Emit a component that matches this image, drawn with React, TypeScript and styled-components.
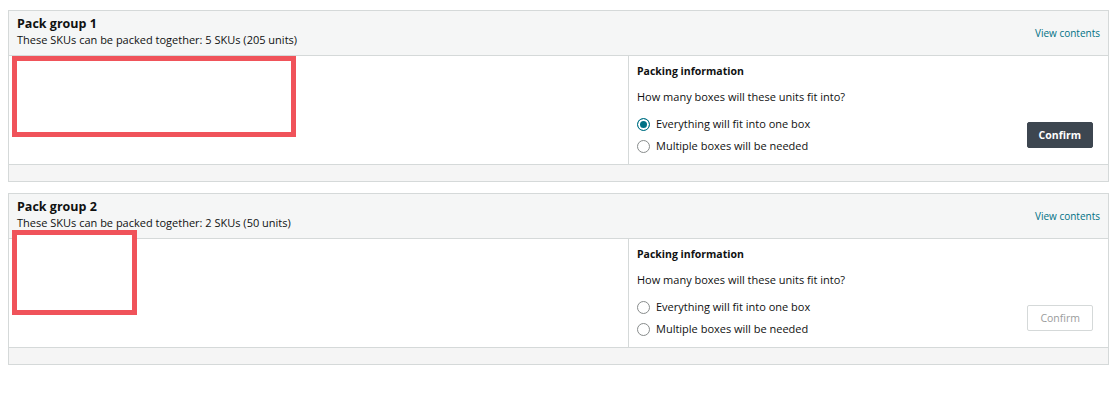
import React, { useState } from 'react';
import styled, { createGlobalStyle } from 'styled-components';

const GlobalStyle = createGlobalStyle`
  html, body {
    margin: 0;
    padding: 0;
    background: #ffffff;
  }
  body {
    font-family: 'Open Sans', 'Liberation Sans', sans-serif;
    color: #0f1111;
  }
`;

type Group = {
  id: number;
  skus: number;
  units: number;
  redact: { left: number; top: number; width: number; height: number };
  defaultChoice: 'one' | 'multiple' | null;
};

const groups: Group[] = [
  { id: 1, skus: 5, units: 205, redact: { left: 3, top: 0, width: 284, height: 81 }, defaultChoice: 'one' },
  { id: 2, skus: 2, units: 50, redact: { left: 3, top: -9, width: 125, height: 85 }, defaultChoice: null },
];

function PackGroup({ group }: { group: Group }) {
  const [choice, setChoice] = useState<'one' | 'multiple' | null>(group.defaultChoice);

  return (
    <Card>
      <CardHeader>
        <div>
          <Title>Pack group {group.id}</Title>
          <Subtitle>
            These SKUs can be packed together: {group.skus} SKUs ({group.units} units)
          </Subtitle>
        </div>
        <Link href="#">View contents</Link>
      </CardHeader>
      <CardBody>
        <LeftPane>
          <Redaction
            style={{
              left: group.redact.left,
              top: group.redact.top,
              width: group.redact.width,
              height: group.redact.height,
            }}
          />
        </LeftPane>
        <RightPane>
          <SectionTitle>Packing information</SectionTitle>
          <Question>How many boxes will these units fit into?</Question>
          <ChoiceRow>
            <Options>
              <Option onClick={() => setChoice('one')}>
                <Radio checked={choice === 'one'} />
                Everything will fit into one box
              </Option>
              <Option onClick={() => setChoice('multiple')}>
                <Radio checked={choice === 'multiple'} />
                Multiple boxes will be needed
              </Option>
            </Options>
            <ConfirmButton disabled={!choice} $active={!!choice}>
              Confirm
            </ConfirmButton>
          </ChoiceRow>
        </RightPane>
      </CardBody>
      <CardFooter />
    </Card>
  );
}

export default function App() {
  return (
    <>
      <GlobalStyle />
      <Page>
        {groups.map((g) => (
          <PackGroup key={g.id} group={g} />
        ))}
      </Page>
    </>
  );
}

const Page = styled.div`
  display: flex;
  flex-direction: column;
  gap: 11px;
  padding: 10px 11px 0 8px;
`;

const Card = styled.section`
  border: 1px solid #d5d9d9;
  background: #ffffff;
`;

const CardHeader = styled.header`
  display: flex;
  justify-content: space-between;
  align-items: flex-start;
  box-sizing: border-box;
  height: 45px;
  padding: 4px 8px 0 8px;
  background: #f5f6f6;
  border-bottom: 1px solid #d5d9d9;
`;

const Title = styled.div`
  font-size: 12.5px;
  font-weight: 700;
  line-height: 17px;
  color: #0f1111;
`;

const Subtitle = styled.div`
  font-size: 11px;
  line-height: 14px;
  margin-top: 1px;
  color: #0f1111;
`;

const Link = styled.a`
  font-size: 10px;
  line-height: 14px;
  color: #007185;
  text-decoration: none;
  margin-top: 11px;
`;

const CardBody = styled.div`
  display: grid;
  grid-template-columns: 620px 1fr;
  height: 108px;
  border-bottom: 1px solid #d5d9d9;
`;

const LeftPane = styled.div`
  position: relative;
  border-right: 1px solid #d5d9d9;
`;

const Redaction = styled.div`
  position: absolute;
  box-sizing: border-box;
  border: 5px solid #f0535a;
  background: #ffffff;
`;

const RightPane = styled.div`
  padding: 8px 15px 0 8px;
`;

const SectionTitle = styled.div`
  font-size: 10.5px;
  font-weight: 700;
  line-height: 14px;
`;

const Question = styled.div`
  font-size: 11px;
  line-height: 14px;
  margin-top: 12px;
`;

const ChoiceRow = styled.div`
  display: flex;
  justify-content: space-between;
  align-items: center;
  margin-top: 12px;
`;

const Options = styled.div`
  display: flex;
  flex-direction: column;
  gap: 6px;
`;

const Option = styled.label`
  display: flex;
  align-items: center;
  gap: 6px;
  font-size: 11px;
  line-height: 16px;
  cursor: pointer;
`;

const Radio = styled.span<{ checked: boolean }>`
  box-sizing: border-box;
  width: 13px;
  height: 13px;
  border-radius: 50%;
  border: 1px solid ${(p) => (p.checked ? '#007185' : '#888c8c')};
  background: ${(p) => (p.checked ? '#007185' : '#ffffff')};
  box-shadow: ${(p) => (p.checked ? 'inset 0 0 0 2px #ffffff' : 'none')};
`;

const ConfirmButton = styled.button<{ $active: boolean }>`
  font-family: inherit;
  font-size: 10.5px;
  font-weight: ${(p) => (p.$active ? 700 : 400)};
  height: 26px;
  padding: 0 ${(p) => (p.$active ? 11 : 12)}px;
  border-radius: 2px;
  border: 1px solid ${(p) => (p.$active ? '#3d4650' : '#d5d9d9')};
  background: ${(p) => (p.$active ? '#3d4650' : '#ffffff')};
  color: ${(p) => (p.$active ? '#ffffff' : '#9a9c9c')};
  cursor: ${(p) => (p.$active ? 'pointer' : 'default')};
`;

const CardFooter = styled.footer`
  height: 16px;
  background: #f5f5f5;
`;
